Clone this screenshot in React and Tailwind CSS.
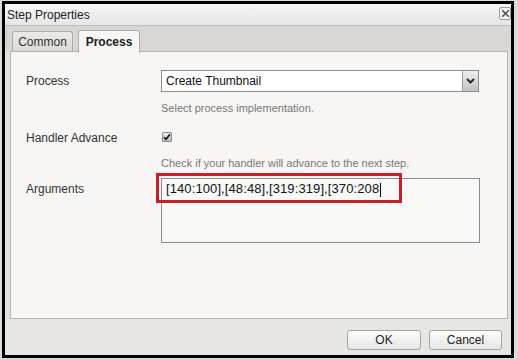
import React from 'react';

const font = { fontFamily: '"Liberation Sans", Arial, sans-serif' };

const Field = ({ label, children, labelClass = 'items-center' }) => (
  <div className="flex">
    <div className={`w-[135px] flex ${labelClass} text-[12px] text-[#333]`}>{label}</div>
    <div className="flex-1">{children}</div>
  </div>
);

const App = () => {
  return (
    <div
      className="w-[518px] h-[359px] bg-[#dcdcdc] pt-[1px] pl-[2px] pr-[4px] pb-[1px]"
      style={font}
    >
      <div className="h-full border-[3px] border-black flex flex-col bg-[#e4e2df]">
        {/* title bar */}
        <div className="h-[22px] flex items-center justify-between pl-[2px] bg-gradient-to-b from-[#f7f7f7] to-[#e6e6e6] border-b border-[#bdbdbd]">
          <span className="text-[12px] text-[#222]">Step Properties</span>
          <div className="self-start w-[12px] h-[13px] mt-[3px] border border-[#9a9a9a] rounded-[2px] bg-[#f4f4f4] flex items-center justify-center">
            <svg width="9" height="9" viewBox="0 0 9 9">
              <path d="M1.2 1.2 L7.8 7.8 M7.8 1.2 L1.2 7.8" stroke="#444" strokeWidth="1.4" />
            </svg>
          </div>
        </div>

        {/* tabs */}
        <div className="h-[25px] flex items-end gap-[5px] pl-[7px] bg-[#d9d7d3]">
          <div className="w-[61px] h-[21px] mb-[-1px] flex items-center justify-center text-[12px] text-[#333] border border-[#aeaaa4] border-b-0 rounded-t-[3px] bg-gradient-to-b from-[#eceae7] to-[#dcd9d5]">
            Common
          </div>
          <div className="relative z-10 w-[62px] h-[23px] mb-[-2px] flex items-center justify-center text-[12px] font-bold text-[#222] border border-[#aeaaa4] border-b-0 rounded-t-[3px] bg-[#f7f6f4]">
            Process
          </div>
        </div>

        {/* panel */}
        <div className="relative flex-1 ml-[5px] mr-[3px] bg-[#f7f6f4] border border-[#b5b2ad] pl-[15px] pt-[18px]">
          <Field label="Process">
            <div className="w-[318px] h-[22px] flex border border-[#8c8c8c] bg-white">
              <div className="flex-1 flex items-center pl-[4px] text-[12px] text-[#111]">Create Thumbnail</div>
              <div className="w-[16px] flex items-center justify-center border-l border-[#9c9c9c] bg-gradient-to-b from-[#efefef] to-[#c2c2c2]">
                <svg width="9" height="6" viewBox="0 0 9 6">
                  <path d="M1 1 L4.5 4.5 L8 1" stroke="#222" strokeWidth="1.8" fill="none" />
                </svg>
              </div>
            </div>
          </Field>
          <Field label="">
            <div className="mt-[8px] h-[16px] flex items-center text-[11px] text-[#777]">
              Select process implementation.
            </div>
          </Field>
          <div className="mt-[13px]">
            <Field label="Handler Advance">
              <div className="h-[16px] flex items-center pl-[1px]">
                <div className="w-[10px] h-[10px] border border-[#8a8a8a] rounded-[1px] bg-gradient-to-b from-[#ececec] to-[#bcbcbc] flex items-center justify-center">
                  <svg width="8" height="8" viewBox="0 0 8 8">
                    <path d="M1 4.2 L3 6.3 L7 1.2" stroke="#111" strokeWidth="1.6" fill="none" />
                  </svg>
                </div>
              </div>
            </Field>
          </div>
          <Field label="">
            <div className="mt-[8px] h-[16px] flex items-center text-[11px] text-[#777]">
              Check if your handler will advance to the next step.
            </div>
          </Field>
          <div className="mt-[7px]">
            <Field label="Arguments" labelClass="items-start pt-[2px]">
              <div className="w-[319px] h-[65px] border border-[#8c8c8c] bg-[#f9f9f8] pl-[4px] pt-[2px] text-[13px] leading-[16px] text-[#111] tracking-[0.1px]">
                [140:100],[48:48],[319:319],[370:208<span className="inline-block w-[1px] h-[14px] bg-black align-middle ml-[1px]" />
              </div>
            </Field>
          </div>
          <div className="absolute left-[145px] top-[121px] w-[246px] h-[30px] border-[3px] border-[#c8202a]" />
        </div>

        {/* footer */}
        <div className="h-[36px] flex justify-end items-start gap-[8px] pt-[11px] pr-[9px] bg-[#e7e6e3]">
          <button className="w-[74px] h-[20px] text-[12px] text-[#222] border border-[#a3a3a3] rounded-[3px] bg-gradient-to-b from-[#fdfdfd] to-[#e6e6e6]">
            OK
          </button>
          <button className="w-[73px] h-[20px] text-[12px] text-[#222] border border-[#a3a3a3] rounded-[3px] bg-gradient-to-b from-[#fdfdfd] to-[#e6e6e6]">
            Cancel
          </button>
        </div>
      </div>
    </div>
  );
};

export default App;
